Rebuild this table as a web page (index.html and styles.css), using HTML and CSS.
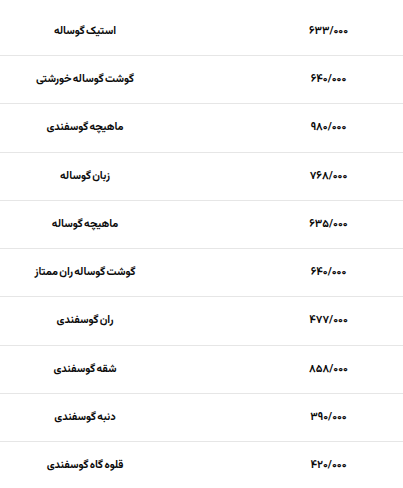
FILE: index.html
```html
<!DOCTYPE html>
<html lang="fa">
<head>
<meta charset="utf-8">
<title>قیمت گوشت</title>
<link rel="stylesheet" href="styles.css">
</head>
<body>
<div class="table">
  <div class="row"><div class="name">استیک گوساله</div><div class="price">۶۳۳/۰۰۰</div></div>
  <div class="row"><div class="name">گوشت گوساله خورشتی</div><div class="price">۶۴۰/۰۰۰</div></div>
  <div class="row"><div class="name">ماهیچه گوسفندی</div><div class="price">۹۸۰/۰۰۰</div></div>
  <div class="row"><div class="name">زبان گوساله</div><div class="price">۷۶۸/۰۰۰</div></div>
  <div class="row"><div class="name">ماهیچه گوساله</div><div class="price">۶۳۵/۰۰۰</div></div>
  <div class="row"><div class="name">گوشت گوساله ران ممتاز</div><div class="price">۶۴۰/۰۰۰</div></div>
  <div class="row"><div class="name">ران گوسفندی</div><div class="price">۴۷۷/۰۰۰</div></div>
  <div class="row"><div class="name">شقه گوسفندی</div><div class="price">۸۵۸/۰۰۰</div></div>
  <div class="row"><div class="name">دنبه گوسفندی</div><div class="price">۳۹۰/۰۰۰</div></div>
  <div class="row"><div class="name">قلوه گاه گوسفندی</div><div class="price">۴۲۰/۰۰۰</div></div>
</div>
</body>
</html>
```
FILE: styles.css
```css
html, body {
  margin: 0;
  padding: 0;
  background: #ffffff;
}
body {
  font-family: "Vazirmatn", "Noto Sans Arabic", "DejaVu Sans", sans-serif;
  font-weight: 700;
  font-size: 11px;
  color: #0a0a0a;
  overflow: hidden;
}
.table {
  padding-top: 7.75px;
}
.row {
  display: grid;
  grid-template-columns: 170px 1fr;
  align-items: center;
  height: 47.25px;
  border-bottom: 1px solid #e6e6e6;
}
.name {
  text-align: center;
  direction: rtl;
  word-spacing: -1.5px;
}
.price {
  text-align: center;
  padding-left: 84px;
  direction: rtl;
}
```
